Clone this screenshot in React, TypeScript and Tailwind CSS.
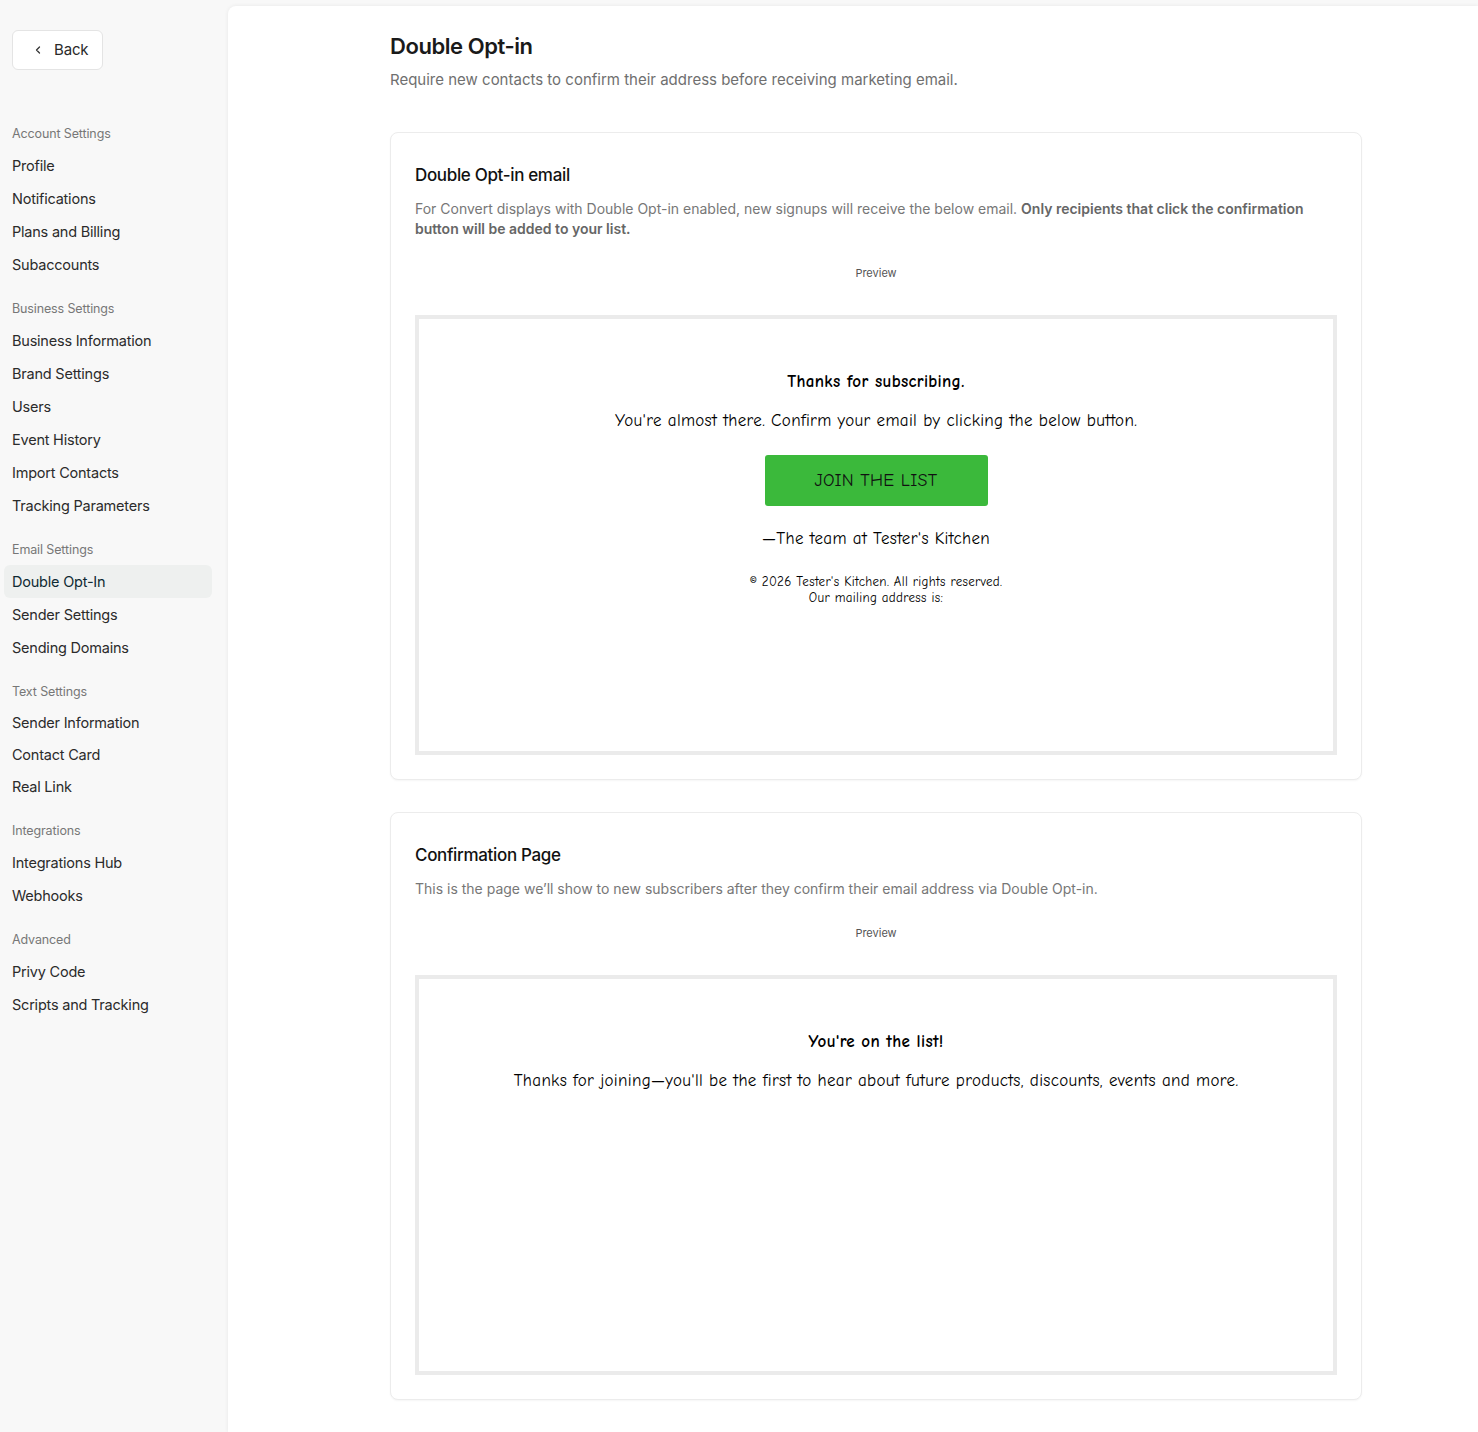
import React from "react";

type Section = { label: string; items: string[]; itemH?: string };

const sections: Section[] = [
  { label: "Account Settings", items: ["Profile", "Notifications", "Plans and Billing", "Subaccounts"] },
  {
    label: "Business Settings",
    items: ["Business Information", "Brand Settings", "Users", "Event History", "Import Contacts", "Tracking Parameters"],
  },
  { label: "Email Settings", items: ["Double Opt-In", "Sender Settings", "Sending Domains"] },
  { label: "Text Settings", items: ["Sender Information", "Contact Card", "Real Link"], itemH: "h-[32px]" },
  { label: "Integrations", items: ["Integrations Hub", "Webhooks"] },
  { label: "Advanced", items: ["Privy Code", "Scripts and Tracking"] },
];

const comic = { fontFamily: '"Comic Sans MS", "Comic Neue", "Chalkboard SE", cursive' };

function Sidebar() {
  return (
    <aside className="w-[228px] shrink-0 bg-[#f8f8f8] pt-[30px]">
      <div className="pl-3">
        <button className="flex h-[40px] w-[91px] items-center rounded-md border border-[#e4e4e4] bg-white pl-[19px] text-[15px] tracking-[-0.01em] text-[#2a2a2a]">
          <svg width="12" height="12" viewBox="0 0 24 24" fill="none" stroke="#333" strokeWidth="2.5" strokeLinecap="round" strokeLinejoin="round" className="mr-[10px]">
            <path d="M15 18l-6-6 6-6" />
          </svg>
          Back
        </button>
      </div>
      <nav className="mt-[48px] px-1">
        {sections.map((s, i) => (
          <div key={s.label} className={i === 0 ? "" : "mt-3"}>
            <div className="flex h-[31px] items-center px-2 pt-[2px] text-[12.5px] tracking-[-0.01em] text-[#777]">{s.label}</div>
            {s.items.map((it) => {
              const active = it === "Double Opt-In";
              return (
                <div
                  key={it}
                  className={`flex ${s.itemH ?? "h-[33px]"} w-[208px] items-center rounded-md px-2 text-[14.5px] tracking-[-0.015em] ${
                    active ? "bg-[#eef0ef] text-[#0f2a33]" : "text-[#2b2b2b]"
                  }`}
                >
                  {it}
                </div>
              );
            })}
          </div>
        ))}
      </nav>
    </aside>
  );
}

function Card({
  title,
  desc,
  boxH,
  children,
}: {
  title: string;
  desc: React.ReactNode;
  boxH: string;
  children: React.ReactNode;
}) {
  return (
    <section className="rounded-lg border border-[#ececec] bg-white px-6 pb-6 pt-[30px] shadow-[0_1px_2px_rgba(0,0,0,0.04)]">
      <h2 className="text-[17px] font-medium leading-6 tracking-[-0.02em] text-[#111]">{title}</h2>
      <p className="mt-[12px] text-[14px] leading-5 text-[#777]">{desc}</p>
      <div className="mt-[26px] text-center text-[11px] leading-4 text-[#555]">Preview</div>
      <div className={`mt-[34px] ${boxH} border-4 border-[#ebebeb] bg-white text-black`} style={comic}>
        {children}
      </div>
    </section>
  );
}

export default function App() {
  return (
    <div className="flex h-screen min-h-[1432px] bg-[#f8f8f8]" style={{ fontFamily: "Inter, 'Noto Sans', sans-serif" }}>
      <Sidebar />
      <main className="mt-[6px] flex-1 rounded-tl-lg bg-white pl-[162px] pt-[26px] shadow-[0_0_4px_rgba(0,0,0,0.07)]">
        <div className="w-[972px]">
          <h1 className="text-[22px] font-semibold leading-7 tracking-[-0.02em] text-[#1a1a1a]">Double Opt-in</h1>
          <p className="mt-[10px] text-[15px] leading-5 text-[#6f6f6f]">
            Require new contacts to confirm their address before receiving marketing email.
          </p>

          <div className="mt-[42px] flex flex-col gap-[32px]">
            <Card
              title="Double Opt-in email"
              boxH="h-[440px]"
              desc={
                <>
                  For Convert displays with Double Opt-in enabled, new signups will receive the below email.{" "}
                  <span className="font-semibold text-[#666]">
                    Only recipients that click the confirmation button will be added to your list.
                  </span>
                </>
              }
            >
              <div className="flex flex-col items-center pt-[51px] text-center tracking-[0.02em]">
                <div className="text-[17px] font-bold leading-6">Thanks for subscribing.</div>
                <div className="mt-[15px] text-[17px] leading-6">
                  You're almost there. Confirm your email by clicking the below button.
                </div>
                <div className="mt-[22px] flex h-[51px] w-[223px] items-center justify-center rounded-[3px] bg-[#3bb93b] text-[18px] text-[#111]">
                  JOIN THE LIST
                </div>
                <div className="mt-[21px] text-[17px] leading-6">—The team at Tester's Kitchen</div>
                <div className="mt-[23px] text-[13px] leading-4">
                  © 2026 Tester's Kitchen. All rights reserved.
                  <br />
                  Our mailing address is:
                </div>
              </div>
            </Card>

            <Card
              title="Confirmation Page"
              boxH="h-[400px]"
              desc="This is the page we’ll show to new subscribers after they confirm their email address via Double Opt-in."
            >
              <div className="flex flex-col items-center pt-[51px] text-center tracking-[0.02em]">
                <div className="text-[17px] font-bold leading-6">You're on the list!</div>
                <div className="mt-[15px] text-[17px] leading-6">
                  Thanks for joining—you'll be the first to hear about future products, discounts, events and more.
                </div>
              </div>
            </Card>
          </div>
        </div>
      </main>
    </div>
  );
}
